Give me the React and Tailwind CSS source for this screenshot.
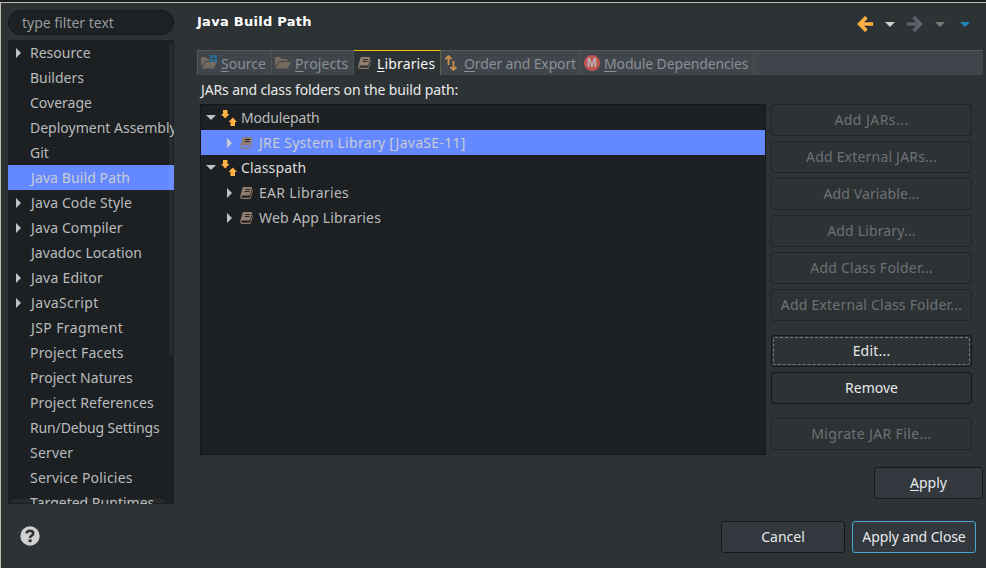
import React from "react";

const categories = [
  { label: "Resource", expandable: true },
  { label: "Builders" },
  { label: "Coverage" },
  { label: "Deployment Assembly" },
  { label: "Git" },
  { label: "Java Build Path", selected: true, tracking: "tracking-[0.1px] ml-[1px]" },
  { label: "Java Code Style", expandable: true, tracking: "tracking-[0.12px] ml-[1px]" },
  { label: "Java Compiler", expandable: true, tracking: "tracking-[0.12px] ml-[1px]" },
  { label: "Javadoc Location", tracking: "tracking-[0.04px] ml-[1px]" },
  { label: "Java Editor", expandable: true, tracking: "tracking-[0.22px] ml-[1px]" },
  { label: "JavaScript", expandable: true, tracking: "tracking-[0.35px] ml-[1px]" },
  { label: "JSP Fragment", tracking: "tracking-[0.38px] ml-[1px]" },
  { label: "Project Facets", tracking: "tracking-[0.2px]" },
  { label: "Project Natures", tracking: "tracking-[0.08px]" },
  { label: "Project References", tracking: "tracking-[0.1px]" },
  { label: "Run/Debug Settings", tracking: "tracking-[-0.14px]" },
  { label: "Server", tracking: "tracking-[0.2px]" },
  { label: "Service Policies", tracking: "tracking-[0.2px]" },
  { label: "Targeted Runtimes" },
];

function RightTriangle({ className = "fill-[#bcc4cb]" }) {
  return (
    <svg width="5" height="10" viewBox="0 0 5 10" className={"shrink-0 " + className}>
      <path d="M0 0L5 5L0 10Z" />
    </svg>
  );
}

function DownTriangle({ className = "fill-[#bcc4cb]" }) {
  return (
    <svg width="10" height="5" viewBox="0 0 10 5" className={"shrink-0 " + className}>
      <path d="M0 0H10L5 5Z" />
    </svg>
  );
}

function BookIcon({ className = "" }) {
  return (
    <svg width="16" height="16" viewBox="0 0 16 16" className={"shrink-0 " + className}>
      <path d="M5 2H12.2Q13.2 2 13 3L11 10.6H3.8Q2.3 10.8 2.3 11.8Q2.4 12.8 3.6 12.8H11.2L13.3 4.4Q14 4.8 13.8 5.8L12 12.7Q11.6 14 10.4 14H3.2Q1.2 14 1.2 12Q1.2 11.3 1.5 10.3L3.3 3.4Q3.7 2 5 2Z" fill="#937d6e" />
      <path d="M6.2 4.5H11M5.7 6.5H10.5" stroke="#272525" strokeWidth="1" fill="none" />
    </svg>
  );
}

function PathIcon() {
  return (
    <svg width="16" height="16" viewBox="0 0 16 16" className="shrink-0" fill="#ffb144">
      <path d="M2 0H6.5V4H8.5L4.25 8.5L0 4H2Z" />
      <path d="M9.5 16H14V12H16L11.75 7.5L7.5 12H9.5Z" />
    </svg>
  );
}

function FolderIcon({ packages }) {
  return (
    <svg width="16" height="16" viewBox="0 0 16 16" className="shrink-0">
      <path d="M0 12V3.2Q0 2 1.2 2H5L6.5 4H11.5Q12.5 4 12.5 5V6H5Q3.8 6 3.3 7Z" fill="#74695f" />
      <path d="M4 7H16L13.3 12.3Q12.8 13.5 11.5 13.5H0.8Z" fill="#74695f" />
      {packages && (
        <>
          <path d="M8 0H16V7H8Z" fill="#40464c" />
          <path d="M9 0H12V3H9ZM13 0H16V3H13ZM9 4H12V7H9ZM13 4H16V7H13Z" fill="#21729b" />
        </>
      )}
    </svg>
  );
}

function OrderIcon() {
  return (
    <svg width="16" height="16" viewBox="0 0 16 16" className="shrink-0" stroke="#c9924a" strokeWidth="1.8" fill="none">
      <path d="M4.5 10V1.5M1.5 4L4.5 1.2L7.5 4" />
      <path d="M9.5 6V14.5M6.5 12L9.5 14.8L12.5 12" />
    </svg>
  );
}

function ModuleIcon() {
  return (
    <span className="flex size-4 shrink-0 items-center justify-center rounded-full bg-[#c25450] font-['Liberation_Sans'] text-[12px] leading-none font-bold text-[#b4b4b8]">
      M
    </span>
  );
}

function ArrowIcon({ flip, className }) {
  return (
    <svg width="16" height="16" viewBox="0 0 16 16" className={className + (flip ? " -scale-x-100" : "")} fill="none" strokeWidth="3.6">
      <path d="M16 8H3M9.4 1.2L2.6 8L9.4 14.8" />
    </svg>
  );
}

function Tab({ icon, mnemonic, rest, width, active, tracking = "" }) {
  return (
    <div
      className={
        "flex h-full items-center border-t border-r pl-[3px] " +
        width +
        (active
          ? " border-t-[#f2c000] border-r-[#5e614f] bg-[#2d3235] text-[#f4f4f4]"
          : " border-t-[#53585a] border-r-[#4b5054] text-[#8b8f96]")
      }
    >
      {icon}
      <span className={"mt-[2px] ml-[4px] whitespace-nowrap " + tracking}>
        <span className="underline decoration-1 underline-offset-2">{mnemonic}</span>
        {rest}
      </span>
    </div>
  );
}

function TreeRow({ label, open, child, selected, color = "text-[#b9bbbc]", tracking = "" }) {
  return (
    <div
      className={
        "flex h-[25px] items-center " +
        (child ? "pl-[26px] " : "pl-[5px] ") +
        (selected ? "bg-[#6488ff] text-[#c9ccd2]" : color)
      }
    >
      {open ? <DownTriangle /> : <RightTriangle className={selected ? "fill-[#c9ccd0]" : "fill-[#bcc4cb]"} />}
      {child ? <BookIcon className="ml-[7px]" /> : <span className="ml-[5px] flex"><PathIcon /></span>}
      <span className={"ml-[4px] whitespace-nowrap " + tracking}>{label}</span>
    </div>
  );
}

function Button({ children, className = "", disabled, focused }) {
  return (
    <button
      className={
        "flex h-[32px] shrink-0 items-center justify-center rounded-[3px] border p-0 whitespace-nowrap " +
        (disabled ? "border-[#202428] text-[#6e7173] " : "text-[#e8e9ea] ") +
        className
      }
    >
      {focused ? (
        <span className="flex h-[28px] w-[197px] items-center justify-center rounded-[2px] border border-dashed border-[#777a7c]">{children}</span>
      ) : (
        children
      )}
    </button>
  );
}

export default function App() {
  return (
    <div className="flex h-[568px] w-[986px] flex-col overflow-hidden bg-[#2d3235] font-['Noto_Sans',sans-serif] text-[14px] leading-[20px]">
      <div className="h-[2px] shrink-0 bg-[#1b1c21]" />
      <div className="flex min-h-0 flex-1 flex-col border-t border-l border-[#c2bbad]">
        <div className="flex h-[501px] shrink-0">
          <aside className="ml-[7px] w-[166px] shrink-0 pt-[7px]">
            <div className="flex h-[25px] items-center rounded-full border border-[#15181c] bg-[#1d2123] pl-[13px] text-[#989a9b]">
              type filter text
            </div>
            <div className="relative mt-[5px] h-[464px] overflow-hidden bg-[#1c2022]">
              {categories.map((c) => (
                <div
                  key={c.label}
                  className={
                    "flex h-[25px] items-center pl-[8px] whitespace-nowrap " +
                    (c.selected ? "bg-[#6488ff] text-[#c9ccd2]" : "text-[#b9bbbc]")
                  }
                >
                  <span className="w-[14px] shrink-0">{c.expandable && <RightTriangle />}</span>
                  <span className={c.tracking}>{c.label}</span>
                </div>
              ))}
              <div className="absolute top-[3px] right-[1px] h-[312px] w-[4px] rounded-full bg-white/5" />
              <div className="absolute bottom-[1px] left-[3px] h-[4px] w-[153px] rounded-full bg-white/5" />
            </div>
          </aside>

          <main className="ml-[23px] flex w-[786px] shrink-0 flex-col">
            <header className="flex h-[47px] items-start justify-between">
              <h1 className="mt-[8px] font-['DejaVu_Sans'] text-[13px] leading-[21px] font-bold tracking-[0.27px] text-white">Java Build Path</h1>
              <div className="mt-[13px] mr-[13px] flex items-center">
                <ArrowIcon className="stroke-[#ffb144]" />
                <DownTriangle className="ml-[12px] fill-[#d0d0cc]" />
                <ArrowIcon flip className="ml-[12px] stroke-[#5c606b]" />
                <DownTriangle className="ml-[12px] fill-[#777a77]" />
                <DownTriangle className="ml-[15px] fill-[#1f86bd]" />
              </div>
            </header>

            <nav className="flex h-[25px] shrink-0 border-l border-[#53585a] bg-[#40464c]">
              <Tab icon={<FolderIcon packages />} mnemonic="S" rest="ource" width="w-[74px]" />
              <Tab icon={<FolderIcon />} mnemonic="P" rest="rojects" width="w-[82px]" tracking="tracking-[0.1px]" />
              <Tab active icon={<BookIcon />} mnemonic="L" rest="ibraries" width="w-[87px]" tracking="tracking-[0.15px]" />
              <Tab icon={<OrderIcon />} mnemonic="O" rest="rder and Export" width="w-[140px]" tracking="tracking-[-0.14px]" />
              <Tab icon={<ModuleIcon />} mnemonic="M" rest="odule Dependencies" width="w-[173px]" tracking="tracking-[-0.14px]" />
              <div className="flex-1 border-t border-[#53585a]" />
            </nav>

            <p className="mt-[5px] ml-[4px] h-[24px] tracking-[-0.12px] text-[#e8e9ea]">JARs and class folders on the build path:</p>

            <div className="ml-[3px] flex">
              <div className="h-[351px] w-[566px] shrink-0 border border-[#14181b] bg-[#1c2022]">
                <TreeRow label="Modulepath" open tracking="tracking-[-0.15px]" />
                <TreeRow label="JRE System Library [JavaSE-11]" child selected tracking="tracking-[0.3px]" />
                <TreeRow label="Classpath" open color="text-[#dcdddd]" tracking="tracking-[0.15px]" />
                <TreeRow label="EAR Libraries" child tracking="tracking-[0.32px]" />
                <TreeRow label="Web App Libraries" child tracking="tracking-[0.14px]" />
              </div>
              <div className="ml-[5px] flex w-[201px] flex-col gap-[5px]">
                <Button disabled className="tracking-[0.45px]">Add JARs...</Button>
                <Button disabled className="tracking-[0.2px]">Add External JARs...</Button>
                <Button disabled className="tracking-[0.1px]">Add Variable...</Button>
                <Button disabled className="tracking-[0.15px]">Add Library...</Button>
                <Button disabled className="tracking-[0.25px]">Add Class Folder...</Button>
                <Button disabled className="tracking-[0.21px]">Add External Class Folder...</Button>
                <Button focused className="mt-[9px] border-[#14181c] tracking-[0.2px]">Edit...</Button>
                <Button className="border-[#14181c]">Remove</Button>
                <Button disabled className="mt-[9px] tracking-[0.36px]">Migrate JAR File...</Button>
              </div>
            </div>

            <div className="mt-[12px] flex justify-end">
              <Button className="w-[109px] border-[#14181c] bg-[#32383e]">
                <span className="underline decoration-1 underline-offset-2">A</span>pply
              </Button>
            </div>
          </main>
        </div>

        <footer className="flex flex-1 items-start pt-[17px] pr-[10px] pl-[19px]">
          <svg width="20" height="20" viewBox="0 0 20 20" className="mt-[5px]">
            <circle cx="10" cy="10" r="9.7" fill="#d0d0d0" />
            <path d="M6.6 7.4Q6.8 4.8 10 4.8Q13.2 4.9 13.2 7.4Q13.2 8.8 11.6 9.7Q10.1 10.5 10.1 12" fill="none" stroke="#2d3235" strokeWidth="2.6" />
            <path d="M8.5 13.4H11.6V16.2H8.5Z" fill="#2d3235" />
          </svg>
          <div className="ml-auto flex gap-[7px]">
            <Button className="w-[124px] border-[#14181c] bg-[#32383e]">Cancel</Button>
            <Button className="w-[124px] border-[#4aa8d4] bg-[#32383e] tracking-[-0.1px]">Apply and Close</Button>
          </div>
        </footer>
      </div>
    </div>
  );
}
